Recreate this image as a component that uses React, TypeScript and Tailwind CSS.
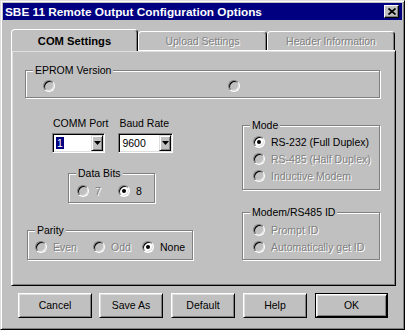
import type { ReactNode } from "react";

const DIS = "text-[#808080] [text-shadow:1px_1px_0_#fff]";

function Radio({
  label,
  checked = false,
  disabled = false,
  className = "",
}: {
  label?: string;
  checked?: boolean;
  disabled?: boolean;
  className?: string;
}) {
  return (
    <div className={`flex h-[12px] items-center gap-[6px] ${className}`}>
      <span
        className={`flex h-[12px] w-[12px] shrink-0 items-center justify-center rounded-full border border-t-[#808080] border-l-[#808080] border-r-white border-b-white shadow-[inset_1px_1px_0_#000,inset_-1px_-1px_0_#dfdfdf] ${
          disabled ? "bg-[#c0c0c0]" : "bg-white"
        }`}
      >
        {checked && <span className="h-[4px] w-[4px] rounded-full bg-black" />}
      </span>
      {label && (
        <span className={`whitespace-nowrap leading-[12px] ${disabled ? DIS : "text-black"}`}>{label}</span>
      )}
    </div>
  );
}

function GroupBox({ label, className = "", children }: { label: string; className?: string; children?: ReactNode }) {
  return (
    <div className={`relative border border-[#808080] shadow-[inset_1px_1px_0_#fff,1px_1px_0_#fff] ${className}`}>
      <span className="absolute -top-[7px] left-[7px] whitespace-nowrap bg-[#c0c0c0] px-[2px] leading-[12px] text-black">
        {label}
      </span>
      {children}
    </div>
  );
}

function Arrow() {
  return (
    <svg width="7" height="4" viewBox="0 0 7 4">
      <path d="M0 0h7L3.5 4z" fill="#000" />
    </svg>
  );
}

function Combo({ value, selected = false, width }: { value: string; selected?: boolean; width: string }) {
  return (
    <div
      className={`flex h-[20px] ${width} border border-t-[#808080] border-l-[#808080] border-r-white border-b-white bg-white p-[1px] shadow-[inset_1px_1px_0_#000,inset_-1px_-1px_0_#dfdfdf]`}
    >
      <div className="flex flex-1 items-center pl-[2px] leading-[12px]">
        {selected ? <span className="bg-[#000080] px-[1px] text-white">{value}</span> : <span>{value}</span>}
      </div>
      <div className="flex w-[12px] items-center justify-center border border-t-[#dfdfdf] border-l-[#dfdfdf] border-r-black border-b-black bg-[#c0c0c0] shadow-[inset_1px_1px_0_#fff,inset_-1px_-1px_0_#808080]">
        <Arrow />
      </div>
    </div>
  );
}

function Button({ children, width }: { children: ReactNode; width: string }) {
  return (
    <div
      className={`flex h-[25px] ${width} items-center justify-center border border-t-white border-l-white border-r-black border-b-black bg-[#c0c0c0] shadow-[inset_1px_1px_0_#dfdfdf,inset_-1px_-1px_0_#808080]`}
    >
      {children}
    </div>
  );
}

export default function App() {
  return (
    <div className="flex h-[330px] w-[405px] flex-col border border-t-[#dfdfdf] border-l-[#dfdfdf] border-r-black border-b-black bg-[#c0c0c0] p-[2px] font-['Liberation_Sans',Arial,sans-serif] text-[10.5px] text-black shadow-[inset_1px_1px_0_#fff,inset_-1px_-1px_0_#808080]">
      {/* title bar */}
      <div className="flex h-[17px] items-center justify-between bg-[#000080] pl-[2px] pr-[3px]">
        <span className="whitespace-nowrap text-[11.8px] font-bold leading-[14px] text-white">
          SBE 11 Remote Output Configuration Options
        </span>
        <div className="flex h-[13px] w-[15px] items-center justify-center border border-t-white border-l-white border-r-black border-b-black bg-[#c0c0c0] shadow-[inset_-1px_-1px_0_#808080]">
          <svg width="8" height="7" viewBox="0 0 8 7">
            <path d="M0.5 0.5L7.5 6.5M7.5 0.5L0.5 6.5" stroke="#000" strokeWidth="1.7" />
          </svg>
        </div>
      </div>

      {/* tabs */}
      <div className="ml-[8px] mt-[9px] w-[385px]">
        <div className="flex h-[21px] items-end">
          <div className="relative z-10 -mb-[1px] flex h-[22px] w-[127px] justify-center rounded-t-[4px] border-t border-l border-r border-t-white border-l-white border-r-black bg-[#c0c0c0] pt-[5px] text-[11.2px] font-bold leading-[13px] shadow-[inset_-1px_0_0_#808080]">
            COM Settings
          </div>
          <div className={`flex h-[19px] w-[129px] justify-center rounded-t-[4px] border-t border-l border-r border-t-white border-l-white border-r-black pt-[3px] leading-[12px] shadow-[inset_-1px_0_0_#808080] ${DIS}`}>
            Upload Settings
          </div>
          <div className={`flex h-[19px] w-[128px] justify-center rounded-t-[4px] border-t border-l border-r border-t-white border-l-white border-r-black pt-[3px] leading-[12px] shadow-[inset_-1px_0_0_#808080] ${DIS}`}>
            Header Information
          </div>
        </div>

        <div className="h-[236px] w-[385px] border border-t-white border-l-white border-r-black border-b-black shadow-[inset_1px_1px_0_#dfdfdf,inset_-1px_-1px_0_#808080]">
          <GroupBox label="EPROM Version" className="ml-[13px] mt-[19px] h-[28px] w-[355px]">
            <div className="flex gap-[173px] pl-[17px] pt-[9px]">
              <Radio disabled />
              <Radio disabled />
            </div>
          </GroupBox>

          <div className="flex">
            <div className="w-[200px]">
              <div className="ml-[40px] mt-[19px] flex gap-[10px]">
                <div className="flex flex-col">
                  <span className="pl-[1px] leading-[12px]">COMM Port</span>
                  <div className="mt-[4px]">
                    <Combo value="1" selected width="w-[53px]" />
                  </div>
                </div>
                <div className="flex flex-col">
                  <span className="pl-[1px] leading-[12px]">Baud Rate</span>
                  <div className="mt-[4px]">
                    <Combo value="9600" width="w-[55px]" />
                  </div>
                </div>
              </div>

              <GroupBox label="Data Bits" className="ml-[56px] mt-[20px] h-[30px] w-[87px]">
                <div className="flex pl-[8px] pt-[11px]">
                  <Radio label="7" disabled className="w-[41px]" />
                  <Radio label="8" checked />
                </div>
              </GroupBox>

              <GroupBox label="Parity" className="ml-[15px] mt-[27px] h-[30px] w-[166px]">
                <div className="flex pl-[7px] pt-[10px]">
                  <Radio label="Even" disabled className="w-[58px]" />
                  <Radio label="Odd" disabled className="w-[49px]" />
                  <Radio label="None" checked />
                </div>
              </GroupBox>
            </div>

            <div className="ml-[30px] w-[138px]">
              <GroupBox label="Mode" className="mt-[27px] h-[65px] w-[138px]">
                <div className="flex flex-col gap-[5px] pl-[10px] pt-[10px]">
                  <Radio label="RS-232 (Full Duplex)" checked />
                  <Radio label="RS-485 (Half Duplex)" disabled />
                  <Radio label="Inductive Modem" disabled />
                </div>
              </GroupBox>

              <GroupBox label="Modem/RS485 ID" className="mt-[22px] h-[48px] w-[138px]">
                <div className="flex flex-col gap-[5px] pl-[10px] pt-[11px]">
                  <Radio label="Prompt ID" disabled />
                  <Radio label="Automatically get ID" disabled />
                </div>
              </GroupBox>
            </div>
          </div>
        </div>
      </div>

      {/* buttons */}
      <div className="ml-[15px] mt-[7px] flex">
        <Button width="w-[74px]">Cancel</Button>
        <div className="ml-[7px]">
          <Button width="w-[64px]">Save As</Button>
        </div>
        <div className="ml-[8px]">
          <Button width="w-[64px]">Default</Button>
        </div>
        <div className="ml-[8px]">
          <Button width="w-[64px]">Help</Button>
        </div>
        <div className="ml-[8px] border border-black">
          <Button width="w-[71px] !h-[23px]">OK</Button>
        </div>
      </div>
    </div>
  );
}
